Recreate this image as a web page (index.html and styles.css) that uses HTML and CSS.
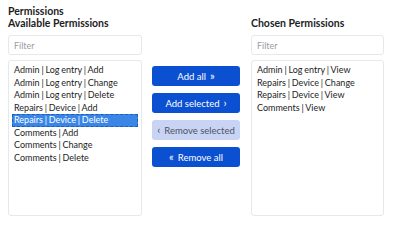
FILE: index.html
```html
<!DOCTYPE html>
<html>
<head>
<meta charset="utf-8">
<link rel="stylesheet" href="styles.css">
</head>
<body>
<div class="page">
  <div class="title">Permissions</div>
  <div class="picker">
    <div class="col">
      <div class="col-title">Available Permissions</div>
      <div class="filter">Filter</div>
      <ul class="list">
        <li>Admin | Log entry | Add</li>
        <li>Admin | Log entry | Change</li>
        <li>Admin | Log entry | Delete</li>
        <li>Repairs | Device | Add</li>
        <li class="sel">Repairs | Device | Delete</li>
        <li>Comments | Add</li>
        <li>Comments | Change</li>
        <li>Comments | Delete</li>
      </ul>
    </div>
    <div class="actions">
      <button class="btn">Add all <span class="ch">&raquo;</span></button>
      <button class="btn">Add selected <span class="ch">&rsaquo;</span></button>
      <button class="btn disabled"><span class="ch">&lsaquo;</span> Remove selected</button>
      <button class="btn"><span class="ch">&laquo;</span> Remove all</button>
    </div>
    <div class="col">
      <div class="col-title">Chosen Permissions</div>
      <div class="filter">Filter</div>
      <ul class="list">
        <li>Admin | Log entry | View</li>
        <li>Repairs | Device | Change</li>
        <li>Repairs | Device | View</li>
        <li>Comments | View</li>
      </ul>
    </div>
  </div>
</div>
</body>
</html>
```
FILE: styles.css
```css
* { box-sizing: border-box; }
html, body { margin: 0; background: #fff; }
body {
  font-family: Lato, "Noto Sans", sans-serif;
  color: #1d1d1d;
}
.page { padding: 5px 8px 0 8px; }
.title {
  font-weight: 700;
  font-size: 10.5px;
  line-height: 12px;
}
.picker {
  display: grid;
  grid-template-columns: 134px 88px 134px;
  column-gap: 10px;
}
.picker > .col:last-child { margin-left: 1px; }
.col { display: flex; flex-direction: column; }
.col-title {
  font-weight: 700;
  font-size: 10.5px;
  line-height: 12px;
  height: 18px;
}
.filter {
  height: 20px;
  border: 1px solid #e6e8ea;
  border-radius: 3px;
  font-size: 9px;
  color: #9a9ea3;
  padding: 4px 5px;
  line-height: 11px;
}
.list {
  list-style: none;
  margin: 5px 0 0 0;
  padding: 3px 3px;
  height: 156px;
  border: 1px solid #e6e8ea;
  border-radius: 3px;
  font-size: 9px;
  line-height: 12.5px;
  word-spacing: -0.5px;
}
.list li { padding: 0 1px 0 2px; white-space: nowrap; }
.list li.sel {
  background: #3a86e6;
  color: #fff;
  outline: 1px dashed #1a5fc0;
  outline-offset: -1px;
}
.actions {
  display: flex;
  flex-direction: column;
  gap: 7px;
  padding-top: 49px;
}
.btn {
  height: 20px;
  border: none;
  border-radius: 3px;
  background: #0b50d0;
  color: #fff;
  font-family: Lato, "Noto Sans", sans-serif;
  font-size: 9.5px;
  padding: 0;
  display: flex;
  align-items: center;
  justify-content: center;
  gap: 4px;
}
.btn .ch { font-size: 11px; line-height: 11px; position: relative; top: -1px; }
.btn.disabled { background: #c9d3f3; color: #4b5566; }
```
